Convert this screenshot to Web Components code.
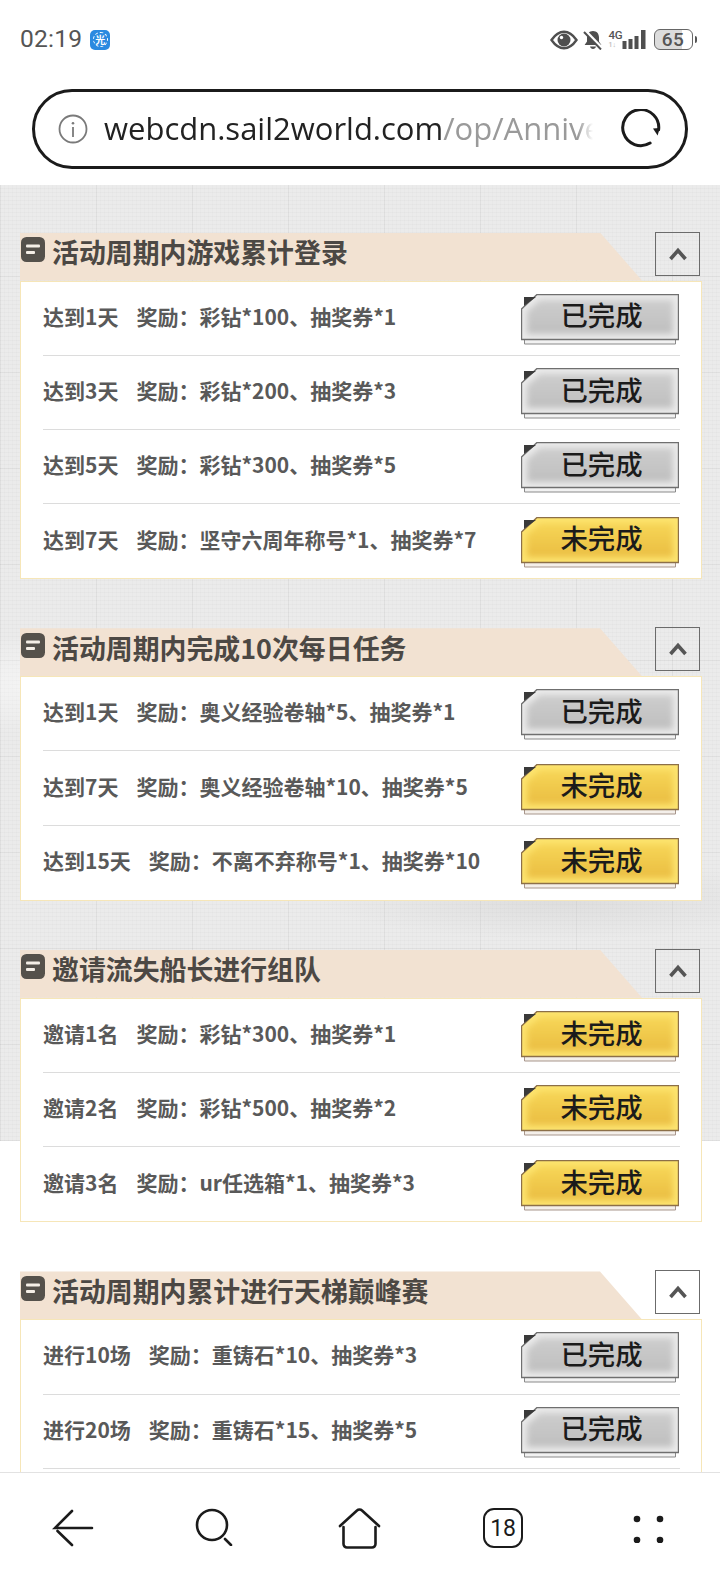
<!DOCTYPE html>
<html lang="zh"><head><meta charset="utf-8"><title>活动</title>
<style>
html,body{margin:0;padding:0;background:#fff}
body{width:720px;height:1584px;overflow:hidden;display:flex;flex-direction:column;font-family:"Noto Sans CJK SC","Noto Sans",sans-serif}
x-page{flex:1;min-height:0}
</style></head><body>
<x-status-bar></x-status-bar>
<x-url-bar></x-url-bar>
<x-page>
<x-section heading="活动周期内游戏累计登录">
 <x-row state="done"><span slot="goal">达到1天</span>奖励：彩钻*100、抽奖券*1</x-row>
 <x-row state="done"><span slot="goal">达到3天</span>奖励：彩钻*200、抽奖券*3</x-row>
 <x-row state="done"><span slot="goal">达到5天</span>奖励：彩钻*300、抽奖券*5</x-row>
 <x-row state="todo"><span slot="goal">达到7天</span>奖励：坚守六周年称号*1、抽奖券*7</x-row>
</x-section>
<x-section heading="活动周期内完成10次每日任务">
 <x-row state="done"><span slot="goal">达到1天</span>奖励：奥义经验卷轴*5、抽奖券*1</x-row>
 <x-row state="todo"><span slot="goal">达到7天</span>奖励：奥义经验卷轴*10、抽奖券*5</x-row>
 <x-row state="todo"><span slot="goal">达到15天</span>奖励：不离不弃称号*1、抽奖券*10</x-row>
</x-section>
<x-section heading="邀请流失船长进行组队">
 <x-row state="todo"><span slot="goal">邀请1名</span>奖励：彩钻*300、抽奖券*1</x-row>
 <x-row state="todo"><span slot="goal">邀请2名</span>奖励：彩钻*500、抽奖券*2</x-row>
 <x-row state="todo"><span slot="goal">邀请3名</span>奖励：ur任选箱*1、抽奖券*3</x-row>
</x-section>
<x-section heading="活动周期内累计进行天梯巅峰赛">
 <x-row state="done"><span slot="goal">进行10场</span>奖励：重铸石*10、抽奖券*3</x-row>
 <x-row state="done"><span slot="goal">进行20场</span>奖励：重铸石*15、抽奖券*5</x-row>
 <x-row></x-row>
</x-section>
</x-page>
<x-nav-bar></x-nav-bar>
<script>
const CJK='"Noto Sans CJK SC","Noto Sans",sans-serif';
function def(name,html){
  customElements.define(name,class extends HTMLElement{
    constructor(){super();this.attachShadow({mode:'open'});}
    connectedCallback(){this.shadowRoot.innerHTML=typeof html==='function'?html(this):html;}
  });
}
def('x-status-bar',`<style>
:host{display:flex;align-items:center;height:79px;box-sizing:border-box;padding:0 23px 0 20px;color:#555;font-family:Roboto,sans-serif;flex:none}
.time{font-size:24.6px;letter-spacing:.2px;line-height:1}
.logo{width:20px;height:20px;border-radius:5px;background:#2b8ae0;margin-left:8px;display:grid;place-items:center;color:#fff;font:700 11px ${CJK};line-height:1}
.logo span{width:15px;height:15px;border:1px dashed #fff;border-radius:50%;display:grid;place-items:center;box-sizing:border-box;font-size:10px}
.sp{flex:1}
svg{display:block}
.right{display:flex;align-items:center}
.net{display:grid;grid-template-rows:auto auto;width:15px;margin-left:6px;height:20px;align-content:start}
.net b{font:500 11.5px/11px Roboto,sans-serif;color:#555;letter-spacing:-.3px}
.net i{font:500 7px/8px Roboto,sans-serif;color:#bbb}
.bat{width:39px;height:21px;margin-left:7px;box-sizing:border-box;border:1.5px solid #666;border-radius:6px;background:linear-gradient(90deg,#dcdcdc 0 72%,#fff 72%);display:grid;place-items:center;font:500 19px/1 Roboto,sans-serif;color:#555;letter-spacing:.4px}
.tip{width:2.5px;height:7px;background:#555;border-radius:0 2px 2px 0;margin-left:2px}
</style>
<span class="time">02:19</span><span class="logo"><span>光</span></span><span class="sp"></span>
<div class="right">
<svg width="28" height="20" viewBox="0 0 28 20"><path d="M1.500 10C6 3.500 10 1.800 14 1.800S22 3.500 26.500 10C22 16.500 18 18.200 14 18.200S6 16.500 1.500 10Z" fill="none" stroke="#4f4f4f" stroke-width="2.400"/><circle cx="14" cy="10" r="6.500" fill="#4f4f4f"/><circle cx="11.500" cy="7.500" r="1.700" fill="#fff"/></svg>
<svg style="margin-left:5px" width="20" height="20" viewBox="0 0 20 20"><path d="M10 1c3.800 0 6 2.800 6 6.500v4l2.400 3.500H1.600L4 11.500v-4C4 3.800 6.200 1 10 1Z" fill="#4f4f4f"/><path d="M7 16.500h6c-.3 1.500-1.500 2.500-3 2.500s-2.700-1-3-2.500Z" fill="#4f4f4f"/><path d="M2 .5 19 18" stroke="#fff" stroke-width="3"/><path d="M1 2 18 19.500" stroke="#4f4f4f" stroke-width="2"/></svg>
<div class="net"><b>4G</b><i>1↓</i></div>
<svg style="margin-left:-3px" width="26" height="20" viewBox="0 0 26 20"><path d="M1.500 11h4v8h-4zM7.500 9h4v10h-4zM13.500 6h4v13h-4zM20 0h4.500v19H20z" fill="#4f4f4f"/></svg>
<div class="bat">65</div><div class="tip"></div>
</div>`);
def('x-url-bar',`<style>
:host{display:flex;align-items:center;flex:none;box-sizing:border-box;width:656px;height:80px;margin:10px 0 16px 32px;border:3.4px solid #1b1b1b;border-radius:40px;background:#fff;padding:0 20px 0 23px}
svg{display:block;flex:none}
.u{margin-left:16px;flex:none;white-space:nowrap;font:400 31px/1.2 "Open Sans",sans-serif;color:#222;-webkit-mask-image:linear-gradient(90deg,#000 474px,transparent 489px)}
.u span{color:#9a9a9a}
.g{flex:1}
</style>
<svg width="30" height="30" viewBox="0 0 30 30"><circle cx="15" cy="15" r="13.500" fill="none" stroke="#7a7a7a" stroke-width="1.800"/><circle cx="15" cy="9.200" r="1.300" fill="#7a7a7a"/><path d="M15 13v10" stroke="#7a7a7a" stroke-width="1.800"/></svg>
<div class="u">webcdn.sail2world.com<span>/op/Annive</span></div><div class="g"></div>
<svg style="margin-right:4px" width="40" height="40" viewBox="0 0 40 40"><path d="M30.500 33A18 18 0 1 1 37.600 19" fill="none" stroke="#1b1b1b" stroke-width="3" stroke-linecap="round" transform="rotate(6 20 20)"/><path d="M32 19.500l6.800-.6-2.200 7.600Z" fill="#1b1b1b"/></svg>`);
def('x-page',`<style>
:host{display:block;overflow:hidden;padding-top:47.5px;box-sizing:border-box;
background-color:#fff;
background-image:
 radial-gradient(ellipse 240px 40px at 560px 715px,rgba(190,190,190,.3),transparent),
 radial-gradient(ellipse 200px 50px at 60px 500px,rgba(255,255,255,.5),transparent),
 repeating-linear-gradient(90deg,rgba(0,0,0,.04) 0 1px,transparent 1px 96px),
 repeating-linear-gradient(0deg,rgba(0,0,0,.035) 0 1px,transparent 1px 96px),
 repeating-linear-gradient(90deg,rgba(0,0,0,.012) 0 1px,transparent 1px 4px),
 repeating-linear-gradient(0deg,rgba(0,0,0,.018) 0 1px,transparent 1px 4px),
 linear-gradient(#ebebeb,#ebebeb);
background-size:100% 956px;background-repeat:no-repeat;background-position:0 0}
</style><slot></slot>`);
def('x-section',h=>`<style>
:host{display:block;margin:0 18px 49px 20px;font-family:${CJK}}
.head{display:grid;grid-template-columns:1fr 46px;height:48px}
.bar{grid-area:1/1/2/3;background:#f2e2d2;clip-path:polygon(0 0,580px 0,622px 100%,0 100%)}
.t{grid-area:1/1;z-index:1;display:flex;align-items:center;gap:7px;padding-left:1px;font:700 26.9px/1 ${CJK};color:#4c4844;white-space:nowrap;padding-bottom:14px}
.t span{padding-top:6px}
.up{grid-area:1/2;z-index:1;width:45px;height:44px;box-sizing:border-box;border:1px solid #6b6b6b;display:grid;place-items:center;margin-top:-1px;margin-left:-1px}
svg{display:block;flex:none}
.panel{background:#fff;border:1px solid #f6e6b8;padding:0 21px 0 22px}
</style>
<div class="head"><div class="bar"></div>
<div class="t"><svg width="24" height="25" viewBox="0 0 24 25"><rect width="24" height="25" rx="5.500" fill="#55514b"/><rect x="5" y="7.500" width="14" height="3" rx="1" fill="#f4eee6"/><rect x="5" y="14" width="9" height="3" rx="1" fill="#f4eee6"/></svg><span>${h.getAttribute('heading')}</span></div>
<div class="up"><svg width="20" height="14" viewBox="0 0 20 14"><path d="M2.500 12 10 3.500 17.500 12" fill="none" stroke="#555" stroke-width="3.600"/></svg></div></div>
<div class="panel"><slot></slot></div>`);
def('x-row',h=>{const s=h.getAttribute('state');return `<style>
:host{display:flex;align-items:center;justify-content:space-between;height:74.2px;box-sizing:border-box;font:700 21px/1 ${CJK};color:#595959;white-space:nowrap;border-bottom:1px solid #dcdcdc}
:host(:last-child){border-bottom:0}
.l{display:flex;gap:18px;padding-bottom:4px}
</style><div class="l"><slot name="goal"></slot><span><slot></slot></span></div>${s?`<x-btn state="${s}"></x-btn>`:''}`});
def('x-btn',h=>{const d=h.getAttribute('state')==='done';
const C=d?{e:'#ebebeb',c1:'#cdcdcd',c2:'#bfbfbf',s:'#6f6f6f',ls:'#8a8a8a',lf:'#f2f2f2'}:{e:'#fde46f',c1:'#f7d657',c2:'#eabd42',s:'#8c6f48',ls:'#a8968c',lf:'#f4efea'};
return `<style>
:host{display:grid;width:158px;height:51px;flex:none;margin:2px 1px 0 0;font:500 27.4px/1 ${CJK};color:#1b1b1b}
svg,.x{grid-area:1/1}
svg{display:block}
.x{display:grid;place-items:center;padding:0 0 8px 3px}
</style>
<svg width="158" height="51" viewBox="0 0 158 51"><defs><linearGradient id="g" x1="0" y1="0" x2="0" y2="1"><stop offset="0" stop-color="${C.c1}"/><stop offset="1" stop-color="${C.c2}"/></linearGradient><filter id="b" x="-10%" y="-30%" width="120%" height="160%"><feGaussianBlur stdDeviation="3"/></filter><clipPath id="k"><path d="M16 .5H157.500V45.500H.5V15Z"/></clipPath></defs>
<path d="M3.500 45.500h151v4.500h-151z" fill="${C.lf}" stroke="${C.ls}"/>
<path d="M16 .5H157.500V45.500H.5V15Z" fill="${C.e}"/>
<g clip-path="url(#k)"><path d="M19 6H152V40H6V17Z" fill="url(#g)" filter="url(#b)"/></g>
<path d="M16 .5H157.500V45.500H.5V15Z" fill="none" stroke="${C.s}" stroke-width="1.400"/>
<path d="M3 3h12L3 12Z" fill="#3a3a3a"/></svg>
<div class="x">${d?'已完成':'未完成'}</div>`});
def('x-nav-bar',`<style>
:host{display:flex;align-items:flex-start;flex:none;box-sizing:border-box;height:112px;background:#fff;border-top:1.5px solid #e2e2e2;padding:35px 0 0 52px}
svg{display:block;flex:none}
.n{font:400 23px/1 Roboto,sans-serif;color:#1b1b1b;letter-spacing:-.3px}
.tab{width:40px;height:40px;flex:none;box-sizing:border-box;border:2.600px solid #1b1b1b;border-radius:11px;display:grid;place-items:center;margin-left:102px}
</style>
<svg style="margin-top:1px" width="42" height="38" viewBox="0 0 42 38" fill="none" stroke="#1b1b1b" stroke-width="2.600" stroke-linecap="round"><path d="M20 2 3 19h37M5.500 22 20 36"/></svg>
<svg style="margin-left:101px" width="39" height="38" viewBox="0 0 39 38" fill="none" stroke="#1b1b1b" stroke-width="2.600" stroke-linecap="round"><circle cx="17" cy="17" r="15"/><path d="M30 31l6 6"/></svg>
<svg style="margin-left:104px" width="43" height="41" viewBox="0 0 43 41" fill="none" stroke="#1b1b1b" stroke-width="2.600" stroke-linecap="round" stroke-linejoin="round"><path d="M2 18 19 2.500a3.500 3.500 0 0 1 5 0L41 18M5.500 19V36a3.500 3.500 0 0 0 3.500 3.500H34a3.500 3.500 0 0 0 3.500-3.500V19"/></svg>
<div class="tab"><span class="n">18</span></div>
<svg style="margin-left:110px;margin-top:7px" width="31" height="28" viewBox="0 0 31 28" fill="#1b1b1b"><circle cx="4" cy="4" r="3.300"/><circle cx="27" cy="4" r="3.300"/><circle cx="4" cy="25" r="3.300"/><circle cx="27" cy="25" r="3.300"/></svg>`);
</script>
</body></html>
